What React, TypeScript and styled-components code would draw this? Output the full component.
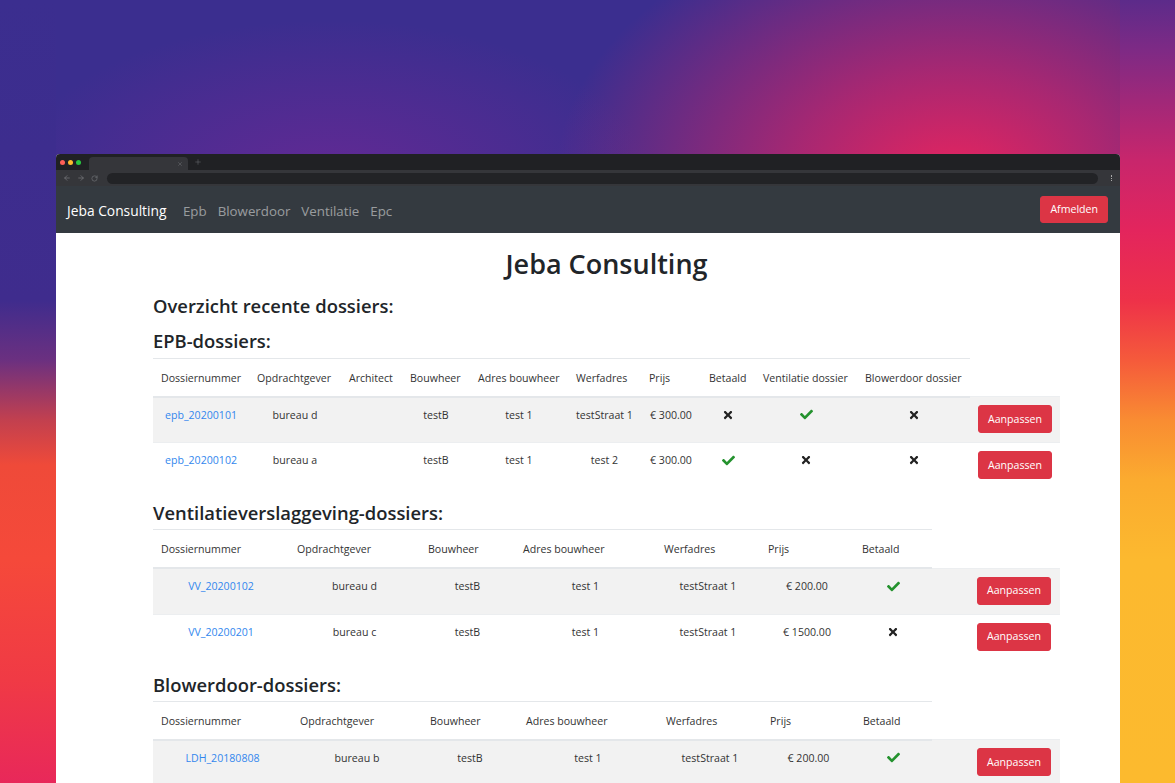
import React from "react";
import styled, { createGlobalStyle } from "styled-components";
import { FaCheck, FaTimes } from "react-icons/fa";
import { ArrowLeft, ArrowRight, RotateCw, X, Plus } from "lucide-react";

const GlobalStyle = createGlobalStyle`
  html, body { margin: 0; padding: 0; overflow: hidden; }
  body { font-family: "Open Sans", "Noto Sans", Arial, sans-serif; color: #212529; }
  * { box-sizing: border-box; }
`;

const Backdrop = styled.div`
  width: 1175px;
  height: 783px;
  overflow: hidden;
  padding: 154px 55px 0 56px;
  background:
    linear-gradient(180deg, #3b2e8f 0px, #3f2c8d 300px, #6b3080 360px, #c2404f 420px, #ef4a39 465px, #f5493a 560px, #f03a45 680px, #e8285a 783px) left top / 56px 100% no-repeat,
    linear-gradient(180deg, #5c2b8a 0px, #7e2a85 50px, #a02879 100px, #c8266c 160px, #e3255d 230px, #ee3149 300px, #f55a3b 360px, #f98c32 420px, #fbab2f 480px, #fcb92f 560px, #fcba2e 783px) right top / 55px 100% no-repeat,
    radial-gradient(ellipse 400px 270px at 955px 180px, rgba(232, 36, 94, 1) 0%, rgba(226, 36, 98, 0.65) 40%, rgba(200, 36, 110, 0) 100%),
    radial-gradient(ellipse 320px 160px at 330px 180px, rgba(112, 40, 150, 0.75), rgba(112, 40, 150, 0)),
    #3b2e8f;
`;

const BrowserWindow = styled.div`
  width: 1064px;
  height: 629px;
  background: #fff;
  border-radius: 4px 4px 0 0;
  overflow: hidden;
  display: flex;
  flex-direction: column;
  & > * {
    flex-shrink: 0;
  }
`;

const TabBar = styled.div`
  height: 16px;
  background: #202124;
  display: flex;
  align-items: flex-end;
  padding-left: 4px;
`;

const Lights = styled.div`
  display: flex;
  gap: 3px;
  align-self: center;
  margin-right: 8px;
`;

const Light = styled.span<{ $c: string }>`
  width: 5px;
  height: 5px;
  border-radius: 50%;
  background: ${(p) => p.$c};
`;

const Tab = styled.div`
  width: 99px;
  height: 13px;
  background: #35363a;
  border-radius: 4px 4px 0 0;
  display: flex;
  align-items: center;
  justify-content: flex-end;
  padding-right: 5px;
  color: #6f7175;
`;

const NewTab = styled.div`
  align-self: center;
  margin-left: 6px;
  color: #6f7175;
  display: flex;
`;

const Toolbar = styled.div`
  height: 16px;
  background: #35363a;
  display: flex;
  align-items: center;
  padding: 0 7px 0 6px;
  gap: 5px;
  color: #7b7d82;
`;

const NavIcon = styled.span`
  display: flex;
  width: 9px;
  justify-content: center;
`;

const UrlField = styled.div`
  flex: 1;
  height: 11px;
  margin-left: 3px;
  border-radius: 6px;
  background: #222326;
`;

const Kebab = styled.span`
  width: 2px;
  height: 6px;
  margin-left: 8px;
  border-left: 1px dotted #aaa;
`;

const Navbar = styled.nav`
  height: 47px;
  background: #343a40;
  display: flex;
  align-items: center;
  padding: 0 12px 0 11px;
`;

const Brand = styled.a`
  font-size: 13.8px;
  color: #fff;
  margin-right: 11px;
  margin-top: 2px;
  white-space: nowrap;
`;

const NavLink = styled.a`
  font-size: 13.3px;
  color: rgba(255, 255, 255, 0.5);
  padding: 0 5.5px;
  margin-top: 3px;
`;

const Spacer = styled.div`
  flex: 1;
`;

const DangerButton = styled.button<{ $h?: number }>`
  display: inline-flex;
  align-items: center;
  justify-content: center;
  vertical-align: top;
  height: ${(p) => p.$h ?? 28}px;
  padding: 0 9px;
  background: #dc3545;
  color: #fff;
  border: 1px solid #dc3545;
  border-radius: 3px;
  font-family: inherit;
  font-size: 10.6px;
  line-height: 1;
`;

const Content = styled.main`
  width: 907px;
  margin-left: 97px;
`;

const Title = styled.h1`
  font-size: 27px;
  font-weight: 600;
  line-height: 1.2;
  text-align: center;
  margin: 15px 0 15px;
`;

const Heading = styled.h3<{ $gap?: number }>`
  font-size: 18.4px;
  font-weight: 600;
  line-height: 1.2;
  margin: 0 0 ${(p) => p.$gap ?? 5}px;
`;

const Table = styled.table`
  width: 907px;
  table-layout: fixed;
  border-collapse: collapse;
  margin-bottom: 14px;
  font-size: 10.6px;
  line-height: 18px;
  color: #333;
`;

const HeadCell = styled.th`
  text-align: left;
  font-weight: 400;
  white-space: nowrap;
  padding: 10px 8px 9px;
  border-top: 1px solid #e4e7ea;
  border-bottom: 2px solid #e4e7ea;
`;

const Row = styled.tr<{ $striped: boolean }>`
  background: ${(p) => (p.$striped ? "#f2f2f2" : "transparent")};
`;

const Cell = styled.td<{ $align?: string }>`
  text-align: ${(p) => p.$align ?? "center"};
  vertical-align: top;
  white-space: nowrap;
  padding: 8px 8px 9px;
  border-top: 1px solid #eceef0;
`;

const ActionCell = styled(Cell)`
  padding-right: 9px;
`;

const DossierLink = styled.a`
  color: #3287ee;
  text-decoration: none;
`;

const IconWrap = styled.span<{ $ok: boolean }>`
  display: inline-flex;
  vertical-align: middle;
  margin-top: -2px;
  color: ${(p) => (p.$ok ? "#24922e" : "#222")};
`;

type CellValue = string | boolean;

const Status = ({ ok }: { ok: boolean }) => (
  <IconWrap $ok={ok}>{ok ? <FaCheck size={13} /> : <FaTimes size={12} />}</IconWrap>
);

type TableProps = {
  headers: string[];
  widths: number[];
  rows: CellValue[][];
};

const DossierTable = ({ headers, widths, rows }: TableProps) => (
  <Table>
    <colgroup>
      {widths.map((w, i) => (
        <col key={i} style={{ width: w }} />
      ))}
    </colgroup>
    <thead>
      <tr>
        {headers.map((h) => (
          <HeadCell key={h}>{h}</HeadCell>
        ))}
      </tr>
    </thead>
    <tbody>
      {rows.map((r, ri) => (
        <Row key={ri} $striped={ri % 2 === 0}>
          {r.map((c, ci) => (
            <Cell key={ci}>
              {ci === 0 ? (
                <DossierLink href="#">{c as string}</DossierLink>
              ) : typeof c === "boolean" ? (
                <Status ok={c} />
              ) : (
                c
              )}
            </Cell>
          ))}
          <ActionCell $align="right">
            <DangerButton>Aanpassen</DangerButton>
          </ActionCell>
        </Row>
      ))}
    </tbody>
  </Table>
);

const epbHeaders = [
  "Dossiernummer",
  "Opdrachtgever",
  "Architect",
  "Bouwheer",
  "Adres bouwheer",
  "Werfadres",
  "Prijs",
  "Betaald",
  "Ventilatie dossier",
  "Blowerdoor dossier",
];
const shortHeaders = [
  "Dossiernummer",
  "Opdrachtgever",
  "Bouwheer",
  "Adres bouwheer",
  "Werfadres",
  "Prijs",
  "Betaald",
];

const epbRows: CellValue[][] = [
  ["epb_20200101", "bureau d", "", "testB", "test 1", "testStraat 1", "€ 300.00", false, true, false],
  ["epb_20200102", "bureau a", "", "testB", "test 1", "test 2", "€ 300.00", true, false, false],
];
const ventRows: CellValue[][] = [
  ["VV_20200102", "bureau d", "testB", "test 1", "testStraat 1", "€ 200.00", true],
  ["VV_20200201", "bureau c", "testB", "test 1", "testStraat 1", "€ 1500.00", false],
];
const blowerRows: CellValue[][] = [
  ["LDH_20180808", "bureau b", "testB", "test 1", "testStraat 1", "€ 200.00", true],
];

export default function App() {
  return (
    <>
      <GlobalStyle />
      <Backdrop>
        <BrowserWindow>
          <TabBar>
            <Lights>
              <Light $c="#ff5f57" />
              <Light $c="#febc2e" />
              <Light $c="#28c840" />
            </Lights>
            <Tab>
              <X size={6} strokeWidth={2} />
            </Tab>
            <NewTab>
              <Plus size={8} strokeWidth={1.5} />
            </NewTab>
          </TabBar>
          <Toolbar>
            <NavIcon>
              <ArrowLeft size={8} strokeWidth={2} />
            </NavIcon>
            <NavIcon>
              <ArrowRight size={8} strokeWidth={2} />
            </NavIcon>
            <NavIcon>
              <RotateCw size={7} strokeWidth={2} />
            </NavIcon>
            <UrlField />
            <Kebab />
          </Toolbar>
          <Navbar>
            <Brand>Jeba Consulting</Brand>
            <NavLink>Epb</NavLink>
            <NavLink>Blowerdoor</NavLink>
            <NavLink>Ventilatie</NavLink>
            <NavLink>Epc</NavLink>
            <Spacer />
            <DangerButton $h={27}>Afmelden</DangerButton>
          </Navbar>
          <Content>
            <Title>Jeba Consulting</Title>
            <Heading $gap={13}>Overzicht recente dossiers:</Heading>
            <Heading>EPB-dossiers:</Heading>
            <DossierTable
              headers={epbHeaders}
              widths={[96, 92, 61, 68, 98, 73, 60, 54, 102, 113, 90]}
              rows={epbRows}
            />
            <Heading>Ventilatieverslaggeving-dossiers:</Heading>
            <DossierTable
              headers={shortHeaders}
              widths={[136, 131, 95, 141, 104, 94, 78, 128]}
              rows={ventRows}
            />
            <Heading>Blowerdoor-dossiers:</Heading>
            <DossierTable
              headers={shortHeaders}
              widths={[139, 130, 96, 140, 104, 93, 77, 128]}
              rows={blowerRows}
            />
          </Content>
        </BrowserWindow>
      </Backdrop>
    </>
  );
}
